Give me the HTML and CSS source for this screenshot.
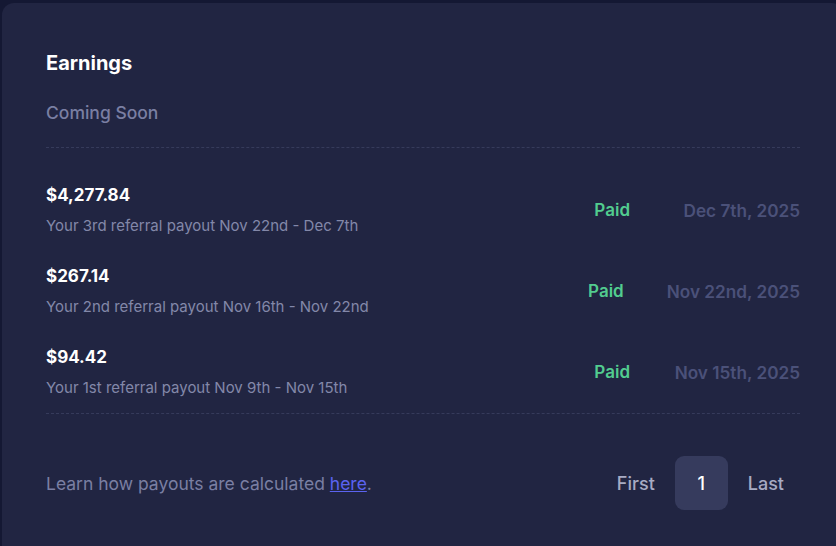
FILE: index.html
```html
<!DOCTYPE html>
<html>
<head>
<meta charset="utf-8">
<link rel="stylesheet" href="styles.css">
</head>
<body>
<section class="card">
  <h1 class="title">Earnings</h1>
  <p class="subtitle">Coming Soon</p>
  <ul class="list">
    <li class="row">
      <div class="info">
        <div class="amount">$4,277.84</div>
        <div class="desc">Your 3rd referral payout Nov 22nd - Dec 7th</div>
      </div>
      <div class="status">Paid</div>
      <div class="date">Dec 7th, 2025</div>
    </li>
    <li class="row">
      <div class="info">
        <div class="amount">$267.14</div>
        <div class="desc">Your 2nd referral payout Nov 16th - Nov 22nd</div>
      </div>
      <div class="status">Paid</div>
      <div class="date">Nov 22nd, 2025</div>
    </li>
    <li class="row">
      <div class="info">
        <div class="amount">$94.42</div>
        <div class="desc">Your 1st referral payout Nov 9th - Nov 15th</div>
      </div>
      <div class="status">Paid</div>
      <div class="date">Nov 15th, 2025</div>
    </li>
  </ul>
  <footer class="footer">
    <p class="note">Learn how payouts are calculated <a class="link" href="#">here</a>.</p>
    <nav class="pager">
      <span class="page">First</span>
      <span class="page active">1</span>
      <span class="page">Last</span>
    </nav>
  </footer>
</section>
</body>
</html>
```

FILE: styles.css
```css
html, body {
  margin: 0;
  padding: 0;
  background: #141833;
  height: 100%;
  overflow: hidden;
}
body {
  font-family: Inter, "Noto Sans", sans-serif;
}
.card {
  margin: 3px 0 0 2px;
  width: 842px;
  min-height: 600px;
  box-sizing: border-box;
  background: #212542;
  border-radius: 12px;
  padding: 48px 44px 0 44px;
}
.title {
  margin: 0;
  font-size: 20px;
  line-height: 24px;
  font-weight: 700;
  color: #ffffff;
}
.subtitle {
  margin: 26px 0 0;
  font-size: 17.5px;
  line-height: 24px;
  font-weight: 500;
  color: #7a7fa3;
  padding-bottom: 22px;
  border-bottom: 1px dashed #363b5b;
  width: 754px;
}
.list {
  list-style: none;
  margin: 0;
  padding: 35px 0 14px;
  width: 754px;
  display: flex;
  flex-direction: column;
  gap: 27px;
  border-bottom: 1px dashed #363b5b;
}
.row {
  display: flex;
  align-items: center;
}
.info {
  flex: 1;
  display: flex;
  flex-direction: column;
  gap: 8px;
}
.amount {
  font-size: 17px;
  line-height: 24px;
  font-weight: 700;
  color: #ffffff;
}
.desc {
  font-size: 15px;
  line-height: 22px;
  color: #8388a9;
}
.status {
  font-size: 17px;
  font-weight: 600;
  color: #52cc8f;
  margin-right: 43px;
}
.date {
  min-width: 127px;
  text-align: right;
  font-size: 17.2px;
  font-weight: 600;
  color: #4b5179;
}
.footer {
  width: 754px;
  display: flex;
  align-items: center;
  justify-content: space-between;
  padding-top: 42px;
}
.note {
  margin: 0;
  font-size: 17.5px;
  color: #7a7fa3;
}
.link {
  color: #5b63f0;
  text-decoration: underline;
}
.pager {
  display: flex;
  gap: 4px;
}
.page {
  height: 54px;
  padding: 0 16px;
  display: flex;
  align-items: center;
  justify-content: center;
  font-size: 18px;
  font-weight: 500;
  color: #a7abc4;
}
.page.active {
  width: 53px;
  padding: 0;
  border-radius: 9px;
  background: #363b5d;
  color: #ffffff;
}
```
